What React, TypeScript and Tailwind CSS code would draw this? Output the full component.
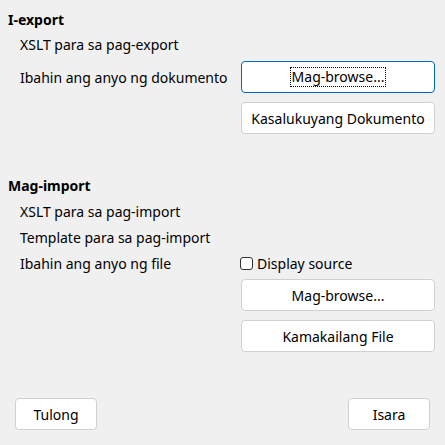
import React from "react";

function Btn({ label, focused }: { label: string; focused?: boolean }) {
  return (
    <button
      className={
        "w-[194px] h-[32px] rounded-[4px] bg-white flex items-center justify-center " +
        (focused ? "border border-[#0067c0]" : "border border-[#d0d0d0]")
      }
    >
      <span className={focused ? "outline outline-1 outline-dotted outline-black px-[1px] leading-[18px]" : ""}>
        {label}
      </span>
    </button>
  );
}

export default function App() {
  return (
    <div className="w-[445px] h-[445px] bg-[#f0f0f0] text-[14px] text-black font-['Noto_Sans',sans-serif] pt-[6px]">
      <div className="h-[26px] flex items-center pl-[8px] font-bold">I-export</div>
      <div className="h-[24px] flex items-center pl-[20px]">XSLT para sa pag-export</div>
      <div className="mt-[5px] flex items-center pl-[20px]">
        <div className="w-[221px]">Ibahin ang anyo ng dokumento</div>
        <Btn label="Mag-browse..." focused />
      </div>
      <div className="mt-[9px] pl-[241px]">
        <Btn label="Kasalukuyang Dokumento" />
      </div>

      <div className="mt-[38px] h-[26px] flex items-center pl-[8px] font-bold">Mag-import</div>
      <div className="h-[26px] flex items-center pl-[20px]">XSLT para sa pag-import</div>
      <div className="h-[26px] flex items-center pl-[20px]">Template para sa pag-import</div>
      <div className="h-[26px] flex items-center pl-[20px]">
        <div className="w-[220px]">Ibahin ang anyo ng file</div>
        <label className="flex items-center gap-[4px]">
          <span className="w-[13px] h-[13px] border border-[#333] rounded-[3px] bg-white" />
          Display source
        </label>
      </div>
      <div className="mt-[3px] pl-[241px]">
        <Btn label="Mag-browse..." />
      </div>
      <div className="mt-[9px] pl-[241px]">
        <Btn label="Kamakailang File" />
      </div>

      <div className="mt-[46px] flex justify-between pl-[15px] pr-[15px]">
        <button className="w-[82px] h-[32px] rounded-[4px] bg-white border border-[#d0d0d0]">Tulong</button>
        <button className="w-[82px] h-[32px] rounded-[4px] bg-white border border-[#d0d0d0]">Isara</button>
      </div>
    </div>
  );
}
